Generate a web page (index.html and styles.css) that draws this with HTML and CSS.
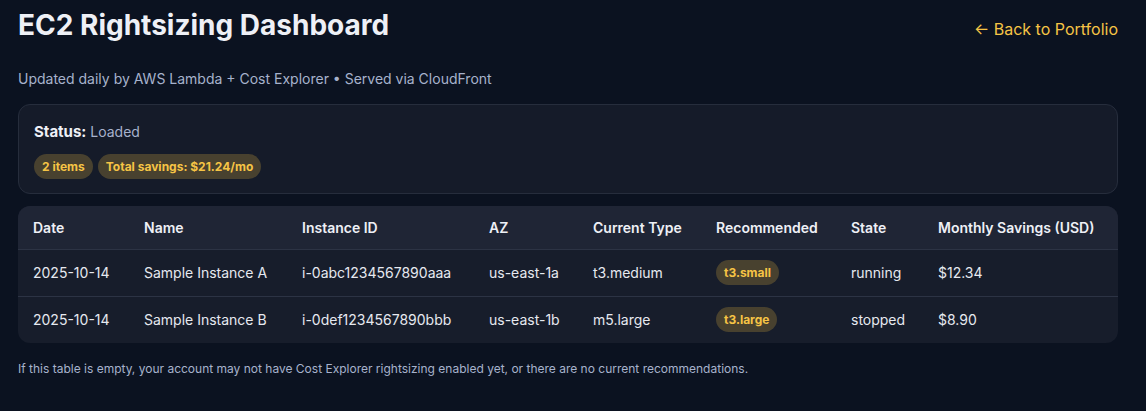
FILE: index.html
```html
<!DOCTYPE html>
<html lang="en">
    <head>
        <meta charset="UTF-8" />
        <meta name="viewport" content="width=device-width, initial-scale=1.0" />
        <title>EC2 Rightsizing Dashboard</title>
        <link rel="stylesheet" href="styles.css">
    </head>
    <body>
        <main class="wrap">
            <header class="top">
                <h1>EC2 Rightsizing Dashboard</h1>
                <a class="back" href="#">← Back to Portfolio</a>
            </header>
            <p class="sub">Updated daily by AWS Lambda + Cost Explorer • Served via CloudFront</p>

            <section class="card">
                <div class="status"><b>Status:</b> <span>Loaded</span></div>
                <div class="pills">
                    <span class="pill">2 items</span>
                    <span class="pill">Total savings: $21.24/mo</span>
                </div>
            </section>

            <div class="table-box">
                <table>
                    <colgroup>
                        <col style="width:111px">
                        <col style="width:158px">
                        <col style="width:187px">
                        <col style="width:104px">
                        <col style="width:123px">
                        <col style="width:135px">
                        <col style="width:87px">
                        <col>
                    </colgroup>
                    <thead>
                        <tr>
                            <th>Date</th>
                            <th>Name</th>
                            <th>Instance ID</th>
                            <th>AZ</th>
                            <th>Current Type</th>
                            <th>Recommended</th>
                            <th>State</th>
                            <th>Monthly Savings (USD)</th>
                        </tr>
                    </thead>
                    <tbody>
                        <tr>
                            <td>2025-10-14</td>
                            <td>Sample Instance A</td>
                            <td>i-0abc1234567890aaa</td>
                            <td>us-east-1a</td>
                            <td>t3.medium</td>
                            <td><span class="pill">t3.small</span></td>
                            <td>running</td>
                            <td>$12.34</td>
                        </tr>
                        <tr>
                            <td>2025-10-14</td>
                            <td>Sample Instance B</td>
                            <td>i-0def1234567890bbb</td>
                            <td>us-east-1b</td>
                            <td>m5.large</td>
                            <td><span class="pill">t3.large</span></td>
                            <td>stopped</td>
                            <td>$8.90</td>
                        </tr>
                    </tbody>
                </table>
            </div>

            <p class="note">If this table is empty, your account may not have Cost Explorer rightsizing enabled yet, or there are no current recommendations.</p>
        </main>
    </body>
</html>
```

FILE: styles.css
```css
* {
    margin: 0;
    padding: 0;
    box-sizing: border-box;
}
body {
    font-family: Inter, "Noto Sans", sans-serif;
    background: #0b1220;
    color: #e6e9f0;
}
.wrap {
    max-width: 1136px;
    padding: 8px 18px 0;
}
.top {
    display: flex;
    justify-content: space-between;
    align-items: center;
    height: 34px;
}
h1 {
    font-size: 28px;
    font-weight: 700;
    color: #eef0f6;
}
.back {
    color: #f6c445;
    font-size: 16px;
    text-decoration: none;
    margin-top: 8px;
}
.sub {
    margin-top: 28px;
    font-size: 14px;
    color: #a7b2cc;
}
.card {
    margin-top: 17px;
    padding: 17px 15px 14px;
    background: #151b29;
    border: 1px solid #262d3c;
    border-radius: 12px;
}
.status {
    font-size: 14px;
    color: #a7b2cc;
}
.status b {
    font-size: 15px;
    color: #eef0f6;
}
.pills {
    display: flex;
    gap: 5px;
    margin-top: 13px;
}
.pill {
    display: inline-block;
    padding: 4px 8px;
    border-radius: 999px;
    background: #48412f;
    color: #f6c445;
    font-size: 12px;
    font-weight: 700;
    line-height: 17px;
}
.table-box {
    margin-top: 12px;
    background: #171d2b;
    border-radius: 12px;
    overflow: hidden;
}
table {
    width: 100%;
    border-collapse: collapse;
    table-layout: fixed;
    font-size: 14px;
}
th {
    text-align: left;
    font-weight: 600;
    color: #eef0f6;
    background: #1f2535;
    height: 43px;
    padding: 0 15px;
    border-bottom: 1px solid #2c3344;
}
td {
    height: 47px;
    padding: 0 15px;
    color: #e6e9f0;
    white-space: nowrap;
}
tbody tr + tr td {
    border-top: 1px solid #2c3344;
}
.note {
    margin-top: 18px;
    font-size: 12px;
    color: #a7b2cc;
}
```
